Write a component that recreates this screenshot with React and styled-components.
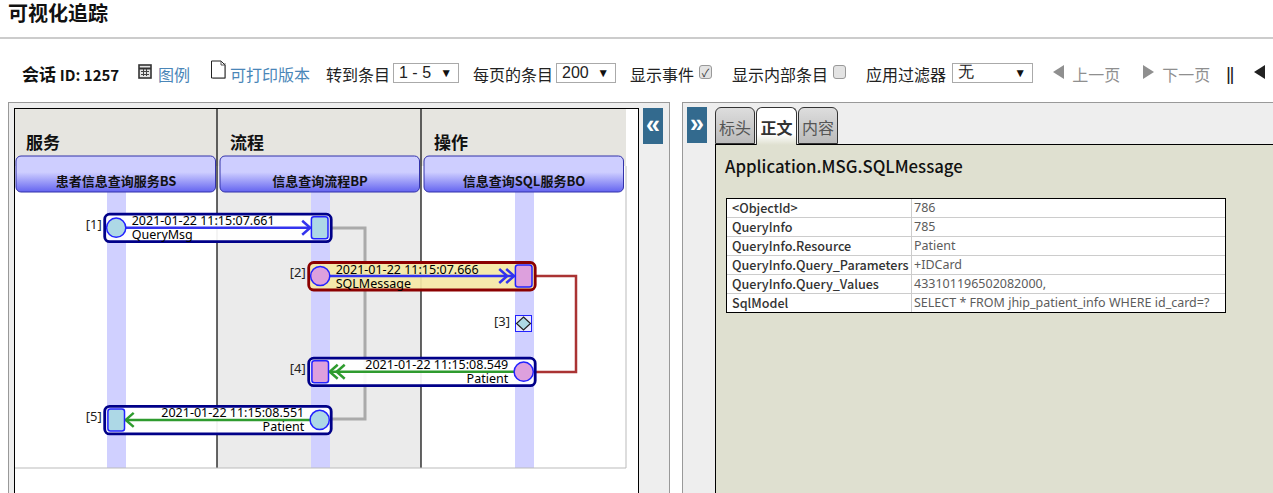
import React from 'react'
import styled, { createGlobalStyle } from 'styled-components'

const GlobalStyle = createGlobalStyle`
    html, body {
        margin: 0;
        padding: 0;
        height: 493px;
        overflow: hidden;
        background: #fff;
        font-family: "Noto Sans CJK SC", sans-serif;
    }
`;
const Page = styled.div`
    width: 1273px;
    height: 493px;
    overflow: hidden;
`;
const Title = styled.h1`
    margin: 0;
    padding: 0 0 0 8px;
    box-sizing: border-box;
    border-bottom: 2px solid #ccc;
    height: 39px;
    font-size: 20px;
    line-height: 26px;
    font-weight: 700;
    color: #111;
`;
const Toolbar = styled.div`
    display: flex;
    align-items: center;
    height: 63px;
    padding: 6px 0 0 22px;
    box-sizing: border-box;
    white-space: nowrap;
    font-size: 16px;
    color: #222;
    width: 1400px;
`;
const SessionLabel = styled.span`
    font-size: 17px;
    font-weight: 700;
    color: #111;
    width: 116px;
    flex: none;
`;
const SessionId = styled.span`
    font-size: 15px;
`;
const Item = styled.span`
    display: inline-flex;
    align-items: center;
    flex: none;
    width: ${p => p.$w}px;
    color: ${p => p.$muted ? '#8f8f8f' : '#222'};
`;
const LinkText = styled.span`
    color: #4a86b8;
`;
const FakeSelect = styled.span`
    display: inline-flex;
    justify-content: space-between;
    align-items: center;
    box-sizing: border-box;
    width: ${p => p.$w}px;
    height: 20px;
    margin-left: ${p => p.$ml || 3}px;
    margin-top: -2px;
    padding: 0 6px 0 5px;
    border: 1px solid #aaa;
    font-family: "Liberation Sans", sans-serif;
    font-size: 16px;
    color: #222;
    i {
        font-style: normal;
        font-size: 12px;
        color: #111;
    }
`;
const Check = styled.span`
    display: inline-flex;
    align-items: center;
    justify-content: center;
    box-sizing: border-box;
    width: 13px;
    height: 14px;
    margin: -3px 0 0 5px;
    border: 1px solid #999;
    border-radius: 3px;
    background: #e3e3e3;
    font-size: 11px;
    line-height: 1;
    color: #333;
`;
const Separator = styled.span`
    font-family: "Liberation Sans", sans-serif;
    font-size: 19px;
    letter-spacing: -1.5px;
    color: #222;
`;
const Panels = styled.div`
    display: flex;
    height: 391px;
    margin-left: 8px;
`;
const LeftPanel = styled.div`
    width: 662px;
    flex: none;
    box-sizing: border-box;
    border: 1px solid #999;
    border-bottom: 0;
    background: #eee;
    padding: 5px 0 0 5px;
    display: flex;
    gap: 4px;
`;
const DiagramFrame = styled.div`
    width: 625px;
    height: 386px;
    box-sizing: border-box;
    flex: none;
    background: #fff;
    border: 1px solid #000;
    border-bottom: 0;
    svg {
        display: block;
    }
`;
const FoldButton = styled.div`
    width: 20px;
    height: 36px;
    flex: none;
    background: #336a8e;
    color: #fff;
    font-size: 25px;
    font-weight: 700;
    line-height: 32px;
    text-align: center;
    font-family: "Liberation Sans", sans-serif;
`;
const RightPanel = styled.div`
    margin-left: 12px;
    width: 620px;
    flex: none;
    box-sizing: border-box;
    border: 1px solid #999;
    border-bottom: 0;
    background: #eee;
    padding-top: 4px;
    padding-left: 4px;
    display: flex;
    gap: 8px;
`;
const DetailColumn = styled.div`
    flex: 1;
    display: flex;
    flex-direction: column;
`;
const Tabs = styled.div`
    display: flex;
    height: 37px;
    gap: 1px;
    position: relative;
    z-index: 1;
`;
const Tab = styled.div`
    width: ${p => p.$active ? 41 : 40}px;
    height: ${p => p.$active ? 38 : 37}px;
    box-sizing: border-box;
    border: 1px solid #333;
    border-bottom: ${p => p.$active ? 0 : '1px solid #333'};
    border-radius: 6px 6px 0 0;
    background: ${p => p.$active ? 'linear-gradient(#fff, #fff 70%, #dfe0d0)' : 'linear-gradient(#ddd, #bbb)'};
    color: ${p => p.$active ? '#333' : '#555'};
    font-weight: ${p => p.$active ? 700 : 400};
    font-size: 16px;
    line-height: 38px;
    text-align: center;
`;
const TabBody = styled.div`
    flex: 1;
    box-sizing: border-box;
    border-top: 1px solid #000;
    border-left: 1px solid #000;
    background: #dfe0d0;
    padding: 8px 0 0 9px;
`;
const MessageTitle = styled.h2`
    margin: 0 0 18px;
    font-size: 16.8px;
    line-height: 27px;
    font-weight: 500;
    color: #111;
`;
const Table = styled.table`
    width: 500px;
    margin-left: 1px;
    border-collapse: separate;
    border-spacing: 0;
    border: 1px solid #000;
    background: #fff;
    td {
        height: 18px;
        padding: 0 0 0 5px;
        border-right: 1px solid #ccc;
        border-bottom: 1px solid #ccc;
        line-height: 18px;
        white-space: nowrap;
    }
    tr:last-child td {
        border-bottom: 0;
    }
    td:first-child {
        width: 179px;
        font-weight: 500;
        color: #333;
        font-size: 12.6px;
    }
    td:last-child {
        border-right: 0;
        color: #5c5c5c;
        font-family: "Noto Sans", sans-serif;
        font-size: 12.5px;
        padding-left: 2px;
    }
`;

const lines = [107, 311, 515]

const Arrow = ({ x1, x2, y, color, double }) => {
    const dir = x2 > x1 ? -1 : 1
    const heads = double ? [0, 7] : [0]
    return (
        <g fill="none" stroke={color} strokeWidth="2.5">
            <line x1={x1} y1={y} x2={x2 + dir} y2={y} />
            {heads.map(o => (
                <polyline key={o} points={`${x2 + dir * (o + 9)},${y - 7} ${x2 + dir * (o + 1)},${y} ${x2 + dir * (o + 9)},${y + 7}`} />
            ))}
        </g>
    )
}

const Call = ({ x, y, border, fill, endFill, reverse, num, time, name, color, double }) => {
    const left = x - 14, top = y - 108
    const w = 226.5
    const rightX = left + w
    const cy = top + 13.5
    const shape = (cx, type) => type === 'circle'
        ? <circle cx={cx} cy={cy} r="9.6" fill={endFill} stroke="#2222ff" strokeWidth="1.5" />
        : <rect x={cx - 8.3} y={cy - 11} width="16.6" height="22" rx="2.5" fill={endFill} stroke="#2222ff" strokeWidth="1.5" />
    return (
        <g fontFamily="Noto Sans, sans-serif" fontSize="12.5">
            <text x={left - 3} y={cy + 1} textAnchor="end" fill="#222" fontSize="13">{num}</text>
            <rect x={left} y={top} width={w} height="27.5" rx="5" fill={fill} fillOpacity="0.93" stroke={border} strokeWidth="2.8" />
            {reverse ? (
                <>
                    <Arrow x1={rightX - 15} x2={left + 20} y={cy} color={color} double={double} />
                    {shape(left + 11.5, 'rect')}
                    {shape(rightX - 11.5, 'circle')}
                    <text x={rightX - 27} y={cy - 2.5} textAnchor="end" fill="#000">{time}</text>
                    <text x={rightX - 27} y={cy + 11.5} textAnchor="end" fill="#000">{name}</text>
                </>
            ) : (
                <>
                    <Arrow x1={left + 15} x2={rightX - 20} y={cy} color={color} double={double} />
                    {shape(left + 11.5, 'circle')}
                    {shape(rightX - 11.5, 'rect')}
                    <text x={left + 27} y={cy - 2.5} fill="#000">{time}</text>
                    <text x={left + 27} y={cy + 11.5} fill="#000">{name}</text>
                </>
            )}
        </g>
    )
}

const TraceDiagram = () => (
    <svg width="623" height="385" viewBox="1 1 623 385">
        <rect x="203" y="0" width="204" height="360" fill="#ebebeb" />
        <rect x="0" y="0" width="612" height="58" fill="#e6e5e0" />
        {lines.map(x => (
            <rect key={x} x={x - 14} y="80" width="19" height="280" fill="#d0d0ff" />
        ))}
        <line x1="203" y1="0" x2="203" y2="360" stroke="#000" strokeWidth="1.2" />
        <line x1="407" y1="0" x2="407" y2="360" stroke="#000" strokeWidth="1.2" />
        <line x1="0" y1="360" x2="612" y2="360" stroke="#bbb" />
        <line x1="612" y1="58" x2="612" y2="360" stroke="#bbb" />
        <g fontFamily="Noto Sans CJK SC, sans-serif" fontWeight="700" fontSize="17" fill="#111">
            <text x="12" y="41">服务</text>
            <text x="216" y="41">流程</text>
            <text x="420" y="41">操作</text>
        </g>
        <defs>
            <linearGradient id="head" x1="0" y1="0" x2="0" y2="1">
                <stop offset="0.45" stopColor="#ceceff" />
                <stop offset="1" stopColor="#6464f0" />
            </linearGradient>
        </defs>
        {[
            { x: 2, label: '患者信息查询服务BS' },
            { x: 206, label: '信息查询流程BP' },
            { x: 410, label: '信息查询SQL服务BO' },
        ].map(h => (
            <g key={h.x}>
                <rect x={h.x} y="48" width="199.5" height="36" rx="5" fill="url(#head)" stroke="#3333aa" />
                <text x={h.x + 100} y="78" textAnchor="middle" fontFamily="Noto Sans CJK SC, sans-serif" fontWeight="700" fontSize="13" fill="#111">{h.label}</text>
            </g>
        ))}
        <polyline points="317,120 351,120 351,311 317,311" fill="none" stroke="#aaa" strokeWidth="3" />
        <polyline points="522,168 562,168 562,264 522,264" fill="none" stroke="#a33" strokeWidth="2.5" />
        <Call x={104.7} y={214.2} border="#000088" fill="#fff" endFill="#add8e6" num="[1]" time="2021-01-22 11:15:07.661" name="QueryMsg" color="#3333ee" />
        <Call x={308.7} y={262.5} border="#8b0000" fill="#f5e8a6" endFill="#dda0dd" num="[2]" time="2021-01-22 11:15:07.666" name="SQLMessage" color="#3333ee" double />
        <Call x={308.7} y={358.2} border="#000088" fill="#fff" endFill="#dda0dd" reverse num="[4]" time="2021-01-22 11:15:08.549" name="Patient" color="#2e9b2e" double />
        <Call x={104.7} y={406.4} border="#000088" fill="#fff" endFill="#add8e6" reverse num="[5]" time="2021-01-22 11:15:08.551" name="Patient" color="#2e9b2e" />
        <text x="496" y="218" textAnchor="end" fontFamily="Noto Sans, sans-serif" fontSize="13" fill="#222">[3]</text>
        <rect x="501.5" y="207.5" width="16" height="16" fill="#e8e8ff" stroke="#2222ff" />
        <polygon points="509.5,209 516.5,215.5 509.5,222 502.5,215.5" fill="#add8e6" stroke="#222" strokeWidth="1.2" />
    </svg>
)

const TriLeft = () => (
    <svg width="13" height="16" viewBox="0 0 13 16" style={{ marginTop: -4 }}><polygon points="12,1 12,15 1,8" fill="currentColor" /></svg>
)
const TriRight = () => (
    <svg width="13" height="16" viewBox="0 0 13 16" style={{ marginTop: -4 }}><polygon points="1,1 1,15 12,8" fill="currentColor" /></svg>
)
const LegendIcon = () => (
    <svg width="14" height="15" viewBox="0 0 14 15" style={{ marginRight: 6, marginTop: -5 }}>
        <rect x="1" y="1" width="12" height="13" fill="#e4e4e4" stroke="#333" strokeWidth="1.6" />
        <path d="M1 4.5h12" stroke="#333" strokeWidth="2" />
        <path d="M3 7.5h8M3 10.5h8M5.5 5v7M8.5 5v7" stroke="#444" />
    </svg>
)
const PageIcon = () => (
    <svg width="18" height="20" viewBox="0 0 18 20" style={{ marginTop: -7, marginRight: 2 }}>
        <path d="M3 3h13v16H3z" fill="#bbb" />
        <path d="M1.5 1h9.5l4 4v13H1.5z" fill="#fff" stroke="#222" />
        <path d="M11 1v4h4" fill="none" stroke="#555" />
    </svg>
)

const rows = [
    ['<ObjectId>', '786'],
    ['QueryInfo', '785'],
    ['QueryInfo.Resource', 'Patient'],
    ['QueryInfo.Query_Parameters', '+IDCard'],
    ['QueryInfo.Query_Values', '433101196502082000,'],
    ['SqlModel', 'SELECT * FROM jhip_patient_info WHERE id_card=?'],
]

const App = () => (
    <Page>
        <GlobalStyle />
        <Title>可视化追踪</Title>
        <Toolbar>
            <SessionLabel>会话 <SessionId>ID: 1257</SessionId></SessionLabel>
            <Item $w={72}><LegendIcon /><LinkText>图例</LinkText></Item>
            <Item $w={116}><PageIcon /><LinkText>可打印版本</LinkText></Item>
            <Item $w={147}>转到条目<FakeSelect $w={66}>1 - 5<i>▼</i></FakeSelect></Item>
            <Item $w={157}>每页的条目<FakeSelect $w={60}>200<i>▼</i></FakeSelect></Item>
            <Item $w={102}>显示事件<Check>✓</Check></Item>
            <Item $w={134}>显示内部条目<Check /></Item>
            <Item $w={186}>应用过滤器<FakeSelect $w={81} $ml={6}>无<i>▼</i></FakeSelect></Item>
            <Item $w={90} $muted><TriLeft />&nbsp;&nbsp;上一页</Item>
            <Item $w={84} $muted><TriRight />&nbsp;&nbsp;下一页</Item>
            <Item $w={27}><Separator>||</Separator></Item>
            <Item $w={20}><TriLeft /></Item>
        </Toolbar>
        <Panels>
            <LeftPanel>
                <DiagramFrame><TraceDiagram /></DiagramFrame>
                <FoldButton>«</FoldButton>
            </LeftPanel>
            <RightPanel>
                <FoldButton>»</FoldButton>
                <DetailColumn>
                    <Tabs>
                        <Tab>标头</Tab>
                        <Tab $active>正文</Tab>
                        <Tab>内容</Tab>
                    </Tabs>
                    <TabBody>
                        <MessageTitle>Application.MSG.SQLMessage</MessageTitle>
                        <Table>
                            <tbody>
                                {rows.map(r => (
                                    <tr key={r[0]}><td>{r[0]}</td><td>{r[1]}</td></tr>
                                ))}
                            </tbody>
                        </Table>
                    </TabBody>
                </DetailColumn>
            </RightPanel>
        </Panels>
    </Page>
)

export default App;
